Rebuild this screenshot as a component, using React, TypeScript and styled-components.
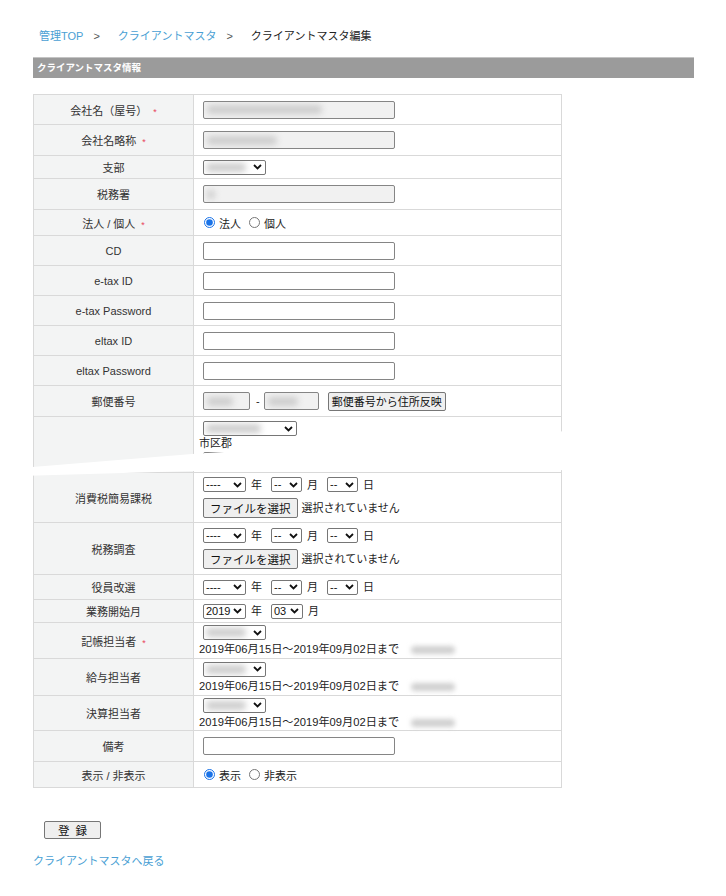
import styled, { createGlobalStyle } from 'styled-components';

const GlobalStyle = createGlobalStyle`
  html, body {
    margin: 0;
    padding: 0;
    background: #fff;
  }
  body {
    font-family: "Liberation Sans", "Noto Sans CJK JP", sans-serif;
    font-size: 11px;
    color: #333;
  }
`;

const Page = styled.div`
  padding: 28px 32px 30px 33px;
`;

const Breadcrumb = styled.nav`
  display: flex;
  align-items: center;
  height: 16px;
  margin-left: 6px;
  font-size: 11px;
  line-height: 16px;
`;

const Crumb = styled.a`
  color: #4a9fd4;
  text-decoration: none;
`;

const Current = styled.span`
  color: #222;
`;

const Sep = styled.span`
  color: #555;
  margin: 0 18px 0 10px;
`;

const SectionBar = styled.div`
  margin-top: 13px;
  height: 20px;
  line-height: 20px;
  background: #9b9b9b;
  border-top: 1px solid #c4c4c4;
  color: #fff;
  font-weight: bold;
  font-size: 9.5px;
  padding-left: 4px;
`;

const TableWrap = styled.div`
  position: relative;
  margin-top: 16px;
  width: 529px;
`;

const Table = styled.table`
  width: 529px;
  border-collapse: collapse;
  border: 1px solid #d9d9d9;
`;

const Row = styled.tr<{ $h: number }>`
  height: ${(p) => p.$h}px;
`;

const Label = styled.th`
  width: 151px;
  background: #f3f4f4;
  border: 1px solid #d9d9d9;
  font-weight: normal;
  font-size: 11px;
  color: #333;
  text-align: center;
  vertical-align: middle;
  padding: 0 4px;
`;

const Req = styled.span`
  color: #e8435a;
  font-size: 9px;
  margin-left: 6px;
`;

const Value = styled.td<{ $top?: boolean }>`
  border: 1px solid #d9d9d9;
  padding: ${(p) => (p.$top ? '4px 5px 0' : '0 5px')};
  vertical-align: ${(p) => (p.$top ? 'top' : 'middle')};
  font-size: 11px;
  color: #222;
`;

const Line = styled.div`
  display: flex;
  align-items: center;
  min-height: 15px;
  line-height: 14px;
`;

const Stack = styled.div<{ $gap?: number }>`
  display: flex;
  flex-direction: column;
  gap: ${(p) => p.$gap ?? 0}px;
`;

const TextBox = styled.div<{ $w?: number; $filled?: boolean }>`
  box-sizing: border-box;
  width: ${(p) => p.$w ?? 192}px;
  height: 18px;
  margin-left: 4px;
  border: 1px solid #858585;
  border-radius: 2px;
  background: ${(p) => (p.$filled ? '#f1f1f1' : '#fff')};
  overflow: hidden;
  display: flex;
  align-items: center;
  padding-left: 3px;
`;

const Blur = styled.span<{ $w: number }>`
  display: inline-block;
  width: ${(p) => p.$w}px;
  height: 9px;
  background: #cdcdcd;
  border-radius: 4px;
  filter: blur(3px);
`;

const SelectBox = styled.div<{ $w: number }>`
  box-sizing: border-box;
  width: ${(p) => p.$w}px;
  height: 15px;
  margin-left: 4px;
  border: 1px solid #767676;
  border-radius: 2px;
  background: #fff;
  display: inline-flex;
  align-items: center;
  justify-content: space-between;
  padding: 0 3px 0 2px;
  font-size: 11px;
  line-height: 13px;
  color: #111;
  overflow: hidden;
`;

const Unit = styled.span`
  margin: 0 0 0 5px;
  width: 16px;
  color: #222;
`;

const FileButton = styled.button`
  box-sizing: border-box;
  height: 20px;
  margin-left: 4px;
  padding: 0 6px;
  background: #efefef;
  border: 1px solid #767676;
  border-radius: 2px;
  font-family: "Noto Sans CJK JP", sans-serif;
  font-size: 11.5px;
  line-height: 18px;
  color: #111;
`;

const FileNote = styled.span`
  margin-left: 4px;
  font-size: 11px;
`;

const ZipButton = styled.button`
  box-sizing: border-box;
  height: 19px;
  margin-left: 9px;
  padding: 0 3px;
  background: #efefef;
  border: 1px solid #767676;
  border-radius: 2px;
  font-family: "Noto Sans CJK JP", sans-serif;
  font-size: 11px;
  line-height: 17px;
  color: #111;
`;

const Dash = styled.span`
  margin: 0 4px 0 6px;
`;

const RadioGroup = styled.label`
  display: inline-flex;
  align-items: center;
  margin-left: 5px;
  margin-right: 3px;
  color: #222;
`;

const Radio = styled.input.attrs({ type: 'radio' })`
  width: 11px;
  height: 11px;
  margin: 0 4px 0 0;
  accent-color: #1a73e8;
`;

const Period = styled.span`
  font-size: 11.2px;
`;

const Name = styled.span`
  display: inline-block;
  margin-left: 12px;
  width: 44px;
  height: 8px;
  background: #cfcfcf;
  border-radius: 4px;
  filter: blur(2.5px);
  vertical-align: middle;
`;

const Tear = styled.div`
  position: absolute;
  left: -13px;
  top: 331px;
  width: 580px;
  height: 55px;
  background: #fff;
  clip-path: polygon(0 43px, 172px 29px, 580px 4px, 580px 45px, 172px 46px, 0 51px);
`;

const Actions = styled.div`
  margin: 33px 0 0 11px;
`;

const Submit = styled.button`
  box-sizing: border-box;
  width: 57px;
  height: 18px;
  background: #efefef;
  border: 1px solid #767676;
  border-radius: 2px;
  font-family: "Noto Sans CJK JP", sans-serif;
  font-size: 11.5px;
  line-height: 16px;
  letter-spacing: 6px;
  padding: 0 0 0 6px;
  color: #111;
`;

const BackLink = styled.a`
  display: block;
  margin-top: 13px;
  color: #4a9fd4;
  font-size: 11px;
  text-decoration: none;
`;

const Chevron = () => (
  <svg width="9" height="6" viewBox="0 0 9 6">
    <path d="M1 1l3.5 3.5L8 1" stroke="#111" strokeWidth="1.8" fill="none" />
  </svg>
);

const Select = ({ w, text, blur }: { w: number; text?: string; blur?: number }) => (
  <SelectBox $w={w}>
    {blur ? <Blur $w={blur} /> : <span>{text}</span>}
    <Chevron />
  </SelectBox>
);

const DateLine = () => (
  <Line>
    <Select w={43} text="----" />
    <Unit>年</Unit>
    <Select w={31} text="--" />
    <Unit>月</Unit>
    <Select w={31} text="--" />
    <Unit>日</Unit>
  </Line>
);

const FileLine = () => (
  <Line>
    <FileButton>ファイルを選択</FileButton>
    <FileNote>選択されていません</FileNote>
  </Line>
);

const Staff = () => (
  <Stack>
    <Line>
      <Select w={63} blur={40} />
    </Line>
    <div>
      <Period>2019年06月15日～2019年09月02日まで</Period>
      <Name />
    </div>
  </Stack>
);

const Lbl = ({ text, req }: { text: string; req?: boolean }) => (
  <Label>
    {text}
    {req && <Req>*</Req>}
  </Label>
);

const plain = ['CD', 'e-tax ID', 'e-tax Password', 'eltax ID', 'eltax Password'];

export default function App() {
  return (
    <>
      <GlobalStyle />
      <Page>
        <Breadcrumb>
          <Crumb href="#">管理TOP</Crumb>
          <Sep>&gt;</Sep>
          <Crumb href="#">クライアントマスタ</Crumb>
          <Sep>&gt;</Sep>
          <Current>クライアントマスタ編集</Current>
        </Breadcrumb>
        <SectionBar>クライアントマスタ情報</SectionBar>
        <TableWrap>
          <Table>
            <tbody>
              <Row $h={30}>
                <Lbl text="会社名（屋号）" req />
                <Value>
                  <TextBox $filled>
                    <Blur $w={115} />
                  </TextBox>
                </Value>
              </Row>
              <Row $h={31}>
                <Lbl text="会社名略称" req />
                <Value>
                  <TextBox $filled>
                    <Blur $w={70} />
                  </TextBox>
                </Value>
              </Row>
              <Row $h={23}>
                <Lbl text="支部" />
                <Value>
                  <Line>
                    <Select w={63} blur={40} />
                  </Line>
                </Value>
              </Row>
              <Row $h={31}>
                <Lbl text="税務署" />
                <Value>
                  <TextBox $filled>
                    <Blur $w={8} />
                  </TextBox>
                </Value>
              </Row>
              <Row $h={26}>
                <Lbl text="法人 / 個人" req />
                <Value>
                  <RadioGroup>
                    <Radio name="corp" defaultChecked />
                    法人
                  </RadioGroup>
                  <RadioGroup>
                    <Radio name="corp" />
                    個人
                  </RadioGroup>
                </Value>
              </Row>
              {plain.map((t) => (
                <Row $h={30} key={t}>
                  <Lbl text={t} />
                  <Value>
                    <TextBox />
                  </Value>
                </Row>
              ))}
              <Row $h={31}>
                <Lbl text="郵便番号" />
                <Value>
                  <Line>
                    <TextBox $w={47} $filled>
                      <Blur $w={26} />
                    </TextBox>
                    <Dash>-</Dash>
                    <TextBox $w={55} $filled style={{ marginLeft: 0 }}>
                      <Blur $w={30} />
                    </TextBox>
                    <ZipButton>郵便番号から住所反映</ZipButton>
                  </Line>
                </Value>
              </Row>
              <Row $h={56}>
                <Label />
                <Value $top>
                  <Stack>
                    <Line>
                      <Select w={94} blur={55} />
                    </Line>
                    <span style={{ lineHeight: '14px' }}>市区郡</span>
                    <TextBox style={{ marginTop: 2 }} />
                  </Stack>
                </Value>
              </Row>
              <Row $h={50}>
                <Lbl text="消費税簡易課税" />
                <Value>
                  <Stack $gap={6}>
                    <DateLine />
                    <FileLine />
                  </Stack>
                </Value>
              </Row>
              <Row $h={52}>
                <Lbl text="税務調査" />
                <Value>
                  <Stack $gap={6}>
                    <DateLine />
                    <FileLine />
                  </Stack>
                </Value>
              </Row>
              <Row $h={25}>
                <Lbl text="役員改選" />
                <Value>
                  <DateLine />
                </Value>
              </Row>
              <Row $h={23}>
                <Lbl text="業務開始月" />
                <Value>
                  <Line>
                    <Select w={43} text="2019" />
                    <Unit>年</Unit>
                    <Select w={32} text="03" />
                    <Unit>月</Unit>
                  </Line>
                </Value>
              </Row>
              <Row $h={36}>
                <Lbl text="記帳担当者" req />
                <Value>
                  <Staff />
                </Value>
              </Row>
              <Row $h={37}>
                <Lbl text="給与担当者" />
                <Value>
                  <Staff />
                </Value>
              </Row>
              <Row $h={35}>
                <Lbl text="決算担当者" />
                <Value>
                  <Staff />
                </Value>
              </Row>
              <Row $h={31}>
                <Lbl text="備考" />
                <Value>
                  <TextBox />
                </Value>
              </Row>
              <Row $h={26}>
                <Lbl text="表示 / 非表示" />
                <Value>
                  <RadioGroup>
                    <Radio name="show" defaultChecked />
                    表示
                  </RadioGroup>
                  <RadioGroup>
                    <Radio name="show" />
                    非表示
                  </RadioGroup>
                </Value>
              </Row>
            </tbody>
          </Table>
          <Tear />
        </TableWrap>
        <Actions>
          <Submit>登録</Submit>
        </Actions>
        <BackLink href="#">クライアントマスタへ戻る</BackLink>
      </Page>
    </>
  );
}
